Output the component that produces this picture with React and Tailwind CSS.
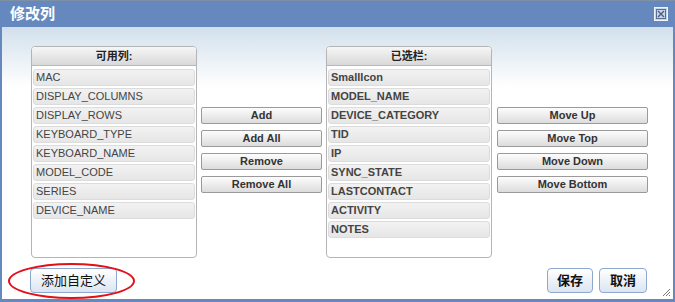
import React from "react";

const available = [
  "MAC",
  "DISPLAY_COLUMNS",
  "DISPLAY_ROWS",
  "KEYBOARD_TYPE",
  "KEYBOARD_NAME",
  "MODEL_CODE",
  "SERIES",
  "DEVICE_NAME",
];

const selected = [
  "SmallIcon",
  "MODEL_NAME",
  "DEVICE_CATEGORY",
  "TID",
  "IP",
  "SYNC_STATE",
  "LASTCONTACT",
  "ACTIVITY",
  "NOTES",
];

const font = "font-['Liberation_Sans','Noto_Sans_CJK_SC',sans-serif]";

function ListBox({ title, items, bold }) {
  return (
    <div className="w-[166px] h-[212px] border border-[#b4b4b4] rounded-[4px] bg-white flex flex-col overflow-hidden">
      <div className="h-[19px] flex items-center justify-center border-b border-[#b8b8b8] bg-[linear-gradient(#f6f6f6,#d9d9d9)] text-[11px] font-bold text-[#222]">
        {title}
      </div>
      <div className="flex flex-col gap-[2px] px-[1px] pt-[3px]">
        {items.map((item) => (
          <div
            key={item}
            className={`h-[17px] flex items-center pl-[2px] rounded-[3px] border border-[#dcdcdc] bg-[linear-gradient(#f2f2f2,#e6e6e6)] text-[11px] text-[#444] ${
              bold ? "font-bold" : ""
            }`}
          >
            {item}
          </div>
        ))}
      </div>
    </div>
  );
}

function GrayButton({ label }) {
  return (
    <button className="h-[17px] w-full rounded-[2px] border border-[#9a9a9a] bg-[linear-gradient(#fdfdfd,#dcdcdc)] text-[11px] font-bold text-[#333] leading-none">
      {label}
    </button>
  );
}

function BlueButton({ label, className = "" }) {
  return (
    <button
      className={`h-[25px] rounded-[4px] border border-[#8ca8cf] bg-[linear-gradient(#ffffff,#dbe5f1)] text-[13px] text-[#111] ${className}`}
    >
      {label}
    </button>
  );
}

export default function App() {
  return (
    <div className={`w-[675px] h-[302px] bg-[#6589bf] flex flex-col ${font}`}>
      <div className="h-[27px] flex items-center justify-between pl-[10px] pr-[7px] border-t border-[#7f8fa6]">
        <span className="text-white text-[15px] font-bold">修改列</span>
        <svg width="14" height="14" viewBox="0 0 14 14">
          <rect x="0.5" y="0.5" width="13" height="13" fill="#c9d6e8" stroke="#eef3fa" />
          <rect x="2.5" y="2.5" width="9" height="9" fill="none" stroke="#5a6f90" />
          <path d="M4 4 L10 10 M10 4 L4 10" stroke="#4a5f80" strokeWidth="1.4" />
        </svg>
      </div>
      <div className="relative flex-1 mx-[2px] mb-[3px] bg-[linear-gradient(#d2e0ec,#ffffff_22%)] flex flex-col">
        <div className="flex pl-[29px] pt-[19px]">
          <ListBox title="可用列:" items={available} />
          <div className="ml-[4px] w-[121px] pt-[61px] flex flex-col gap-[6px]">
            <GrayButton label="Add" />
            <GrayButton label="Add All" />
            <GrayButton label="Remove" />
            <GrayButton label="Remove All" />
          </div>
          <div className="ml-[4px]">
            <ListBox title="已选栏:" items={selected} bold />
          </div>
          <div className="ml-[5px] w-[151px] pt-[61px] flex flex-col gap-[6px]">
            <GrayButton label="Move Up" />
            <GrayButton label="Move Top" />
            <GrayButton label="Move Down" />
            <GrayButton label="Move Bottom" />
          </div>
        </div>
        <div className="flex justify-between pl-[28px] pr-[26px] mt-[10px]">
          <BlueButton label="添加自定义" className="w-[87px]" />
          <div className="flex gap-[6px]">
            <BlueButton label="保存" className="w-[46px] font-bold" />
            <BlueButton label="取消" className="w-[48px] font-bold" />
          </div>
        </div>
        <div className="absolute left-[6px] top-[236px] w-[127px] h-[36px] rounded-[50%] border-2 border-[#e3101a]" />
        <svg className="absolute right-[2px] bottom-[2px]" width="10" height="10" viewBox="0 0 10 10">
          <path d="M9 2 L2 9 M9 5 L5 9 M9 8 L8 9" stroke="#777" strokeWidth="1" />
        </svg>
      </div>
    </div>
  );
}
